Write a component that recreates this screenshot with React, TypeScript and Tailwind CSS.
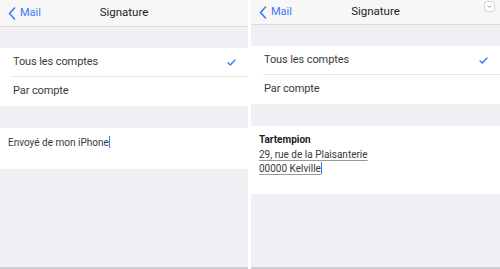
import React from "react";

function Chevron() {
  return (
    <svg width="8" height="13" viewBox="0 0 8 13" className="shrink-0">
      <path d="M6.5 1 L1.5 6.5 L6.5 12" fill="none" stroke="#3a7bf0" strokeWidth="1.6" strokeLinecap="round" strokeLinejoin="round" />
    </svg>
  );
}

function Check() {
  return (
    <svg width="9" height="7" viewBox="0 0 9 7">
      <path d="M1 3.8 L3.3 6 L8 1" fill="none" stroke="#3a7bf0" strokeWidth="1.4" strokeLinecap="round" strokeLinejoin="round" />
    </svg>
  );
}

function Nav({ h, dismiss }: { h: string; dismiss?: boolean }) {
  return (
    <div className={`relative flex items-center bg-[#f7f7f8] border-b border-[#dcdce0] ${h}`}>
      <div className="flex items-center gap-[4px] pl-[8px] text-[11px] text-[#3a7bf0]">
        <Chevron />
        <span>Mail</span>
      </div>
      <div className="absolute inset-x-0 text-center text-[11.5px] text-[#1c1c1c] pointer-events-none">
        Signature
      </div>
      {dismiss && (
        <div className="absolute right-[5px] top-[1px] w-[11px] h-[11px] rounded-[3px] border border-[#d6d6da] bg-white flex items-center justify-center">
          <svg width="5" height="3" viewBox="0 0 5 3">
            <path d="M0.5 0.5 L2.5 2.5 L4.5 0.5" fill="none" stroke="#888" strokeWidth="0.9" />
          </svg>
        </div>
      )}
    </div>
  );
}

function Rows() {
  return (
    <div className="bg-white text-[11px] text-[#3a3a3a] tracking-[-0.1px]">
      <div className="h-[29px] flex items-center justify-between pl-[13px] pr-[12px] relative">
        <span>Tous les comptes</span>
        <Check />
        <div className="absolute left-[12px] right-0 bottom-0 h-px bg-[#e6e6ea]" />
      </div>
      <div className="h-[29px] flex items-center pl-[13px]">
        <span>Par compte</span>
      </div>
    </div>
  );
}

function Caret() {
  return <span className="inline-block w-px h-[12px] bg-[#3a7bf0] align-middle -mt-[2px]" />;
}

export default function App() {
  return (
    <div
      className="w-[500px] h-[269px] flex gap-[3px] bg-white overflow-hidden"
      style={{ fontFamily: "Roboto, 'Noto Sans', sans-serif" }}
    >
      {/* Left panel */}
      <div className="w-[248px] h-full flex flex-col bg-[#efeff4] border-b-[2px] border-[#cfcfd4]">
        <Nav h="h-[27px]" />
        <div className="h-[21px]" />
        <Rows />
        <div className="h-[22px]" />
        <div className="bg-white h-[41px] pl-[8px] pt-[8px] text-[10px] text-[#3a3a3a] leading-[14px]">
          Envoyé de mon iPhone
          <Caret />
        </div>
        <div className="flex-1" />
      </div>
      {/* Right panel */}
      <div className="flex-1 h-full flex flex-col bg-[#efeff4] border-b-[2px] border-[#cfcfd4]">
        <Nav h="h-[25px]" dismiss />
        <div className="h-[21px]" />
        <Rows />
        <div className="h-[22px]" />
        <div className="bg-white h-[68px] pl-[8px] pt-[7px] text-[10px] text-[#3a3a3a] leading-[14.5px]">
          <div className="font-bold text-[#222]">Tartempion</div>
          <div className="underline decoration-[#999] underline-offset-[2px]">29, rue de la Plaisanterie</div>
          <div>
            <span className="underline decoration-[#999] underline-offset-[2px]">00000 Kelville</span>
            <Caret />
          </div>
        </div>
        <div className="flex-1" />
      </div>
    </div>
  );
}
